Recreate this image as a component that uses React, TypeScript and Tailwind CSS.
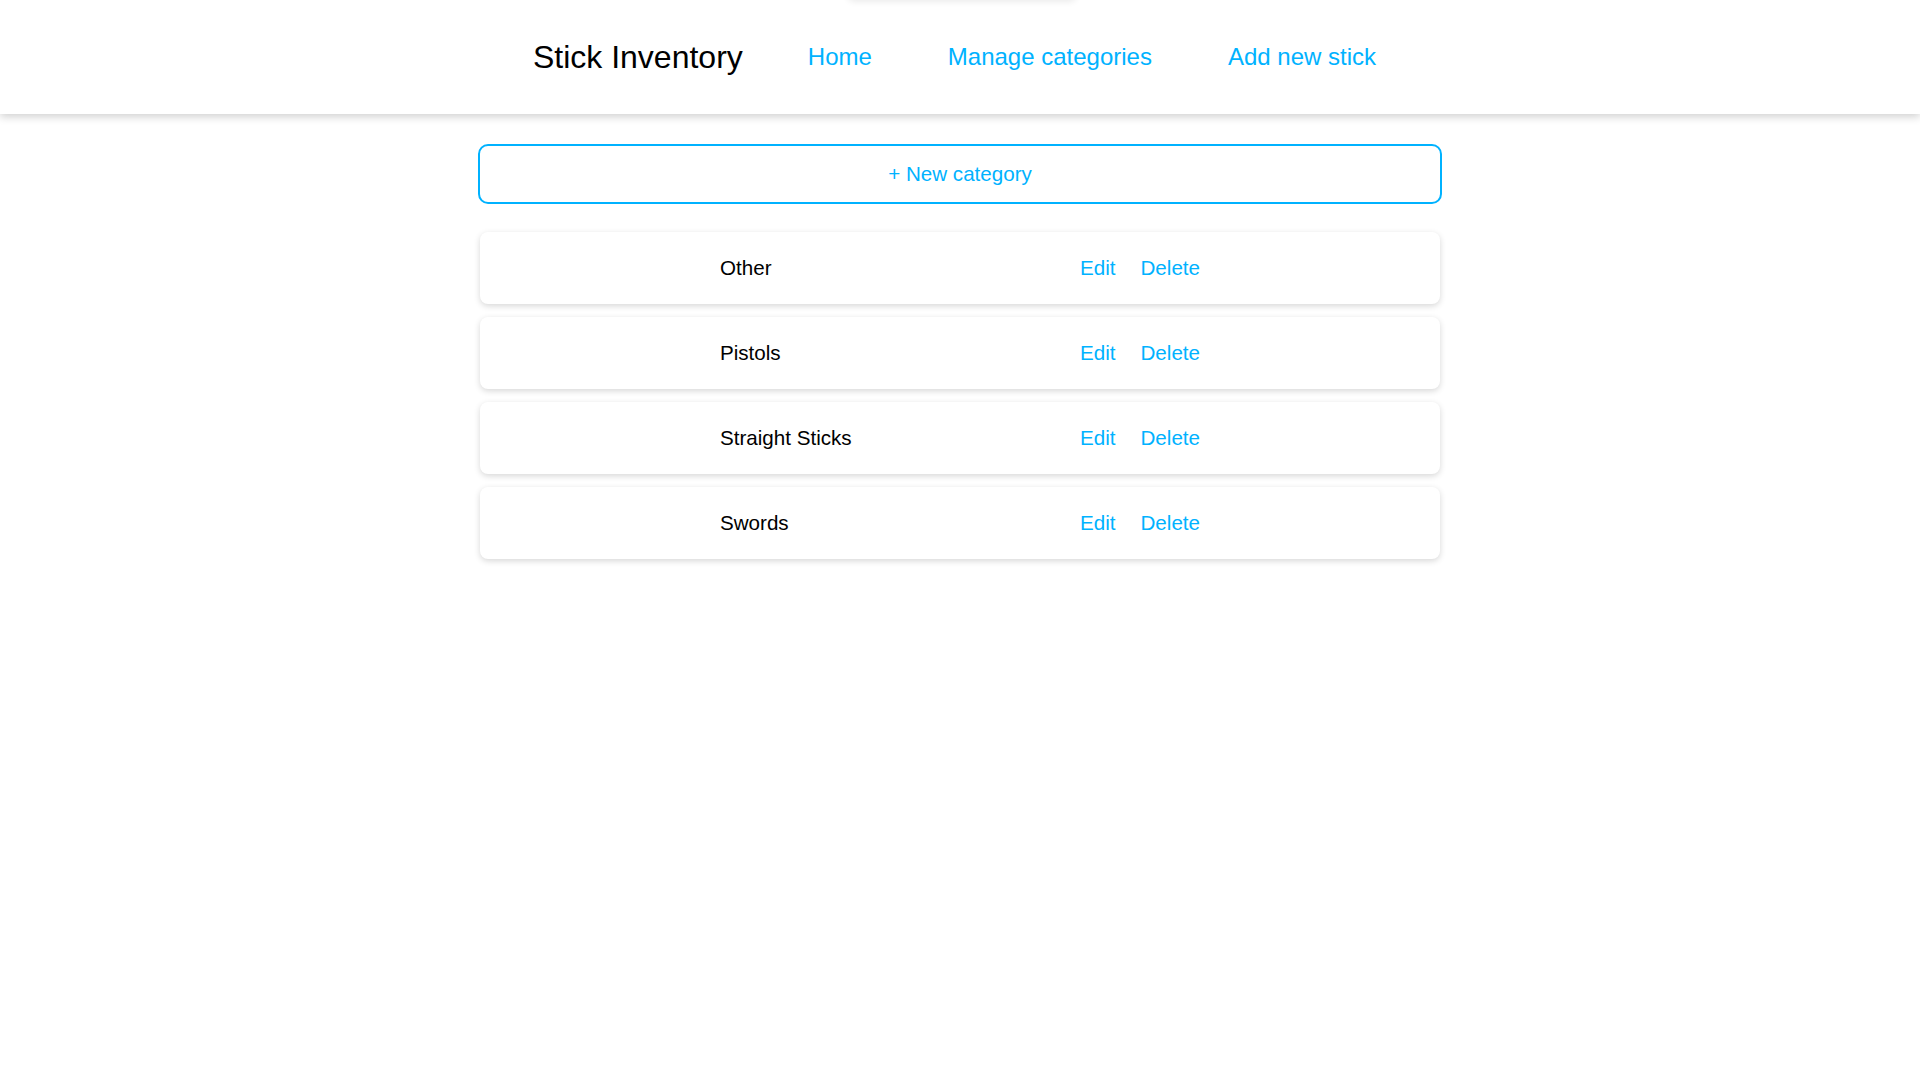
const categories = ['Other', 'Pistols', 'Straight Sticks', 'Swords']

export default function App() {
  return (
    <div className="relative min-h-screen bg-white font-['Liberation_Sans',Arial,sans-serif] text-black overflow-hidden">
      {/* faint leftover shadow at the very top */}
      <div className="absolute left-[847px] top-[-24px] h-[24px] w-[230px] rounded-lg shadow-[0_2px_6px_rgba(0,0,0,0.08)]" />

      <header className="flex h-[114px] items-center justify-center bg-white pr-[11px] shadow-[0_3px_8px_rgba(0,0,0,0.18)]">
        <h1 className="text-[32px] leading-none">Stick Inventory</h1>
        <nav className="ml-[65px] flex items-center gap-[76px] text-[24px] leading-none text-[#00b2ff]">
          <a href="#">Home</a>
          <a href="#">Manage categories</a>
          <a href="#">Add new stick</a>
        </nav>
      </header>

      <main className="mx-auto mt-[30px] flex w-[960px] flex-col items-center">
        <button className="h-[60px] w-[964px] shrink-0 rounded-[10px] border-2 border-[#00b2ff] bg-white text-[20.6px] text-[#00b2ff]">
          + New category
        </button>

        <div className="mt-[28px] flex w-full flex-col gap-[13px]">
          {categories.map((name) => (
            <div
              key={name}
              className="flex h-[72px] items-center rounded-lg bg-white text-[20.6px] leading-none shadow-[0_2px_6px_rgba(0,0,0,0.16)]"
            >
              <div className="w-[600px] pl-[240px]">{name}</div>
              <a href="#" className="text-[#00b2ff]">Edit</a>
              <a href="#" className="ml-[25px] text-[#00b2ff]">Delete</a>
            </div>
          ))}
        </div>
      </main>
    </div>
  )
}
